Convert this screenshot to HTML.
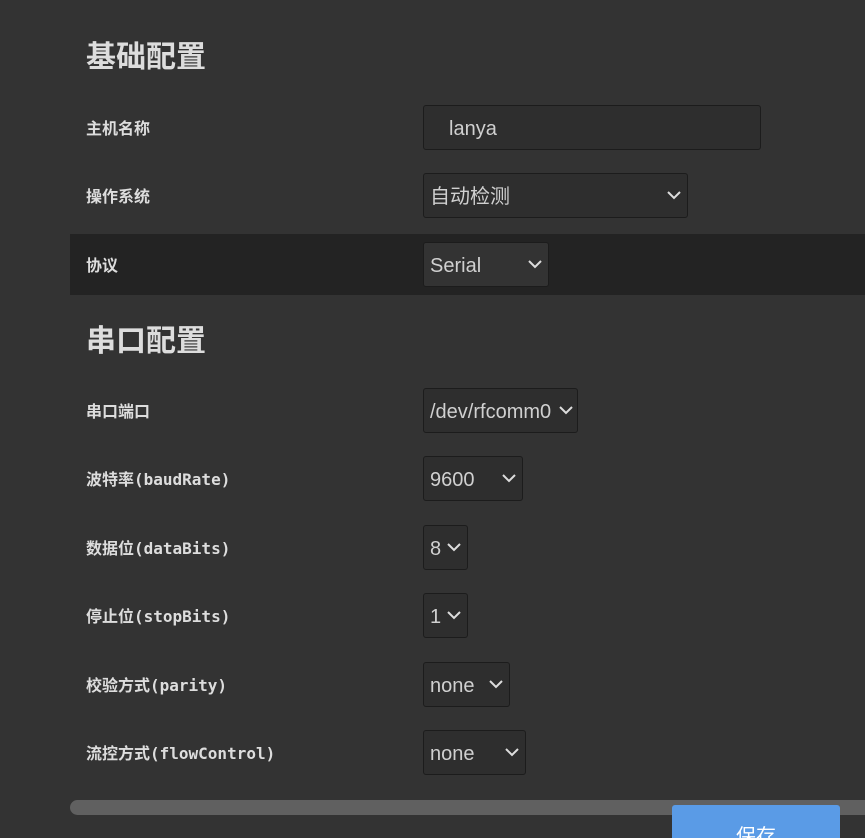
<!DOCTYPE html>
<html style="overflow:hidden;height:838px"><head><meta charset="utf-8"><style>
body{margin:0;width:865px;height:838px;background:#333;overflow:hidden;position:relative;font-family:"Liberation Sans","Noto Sans CJK SC",sans-serif;color:#ddd}
.h{position:absolute;left:86px;font-size:30px;font-weight:bold;color:#ddd;line-height:1}
.l{position:absolute;left:86px;font-size:16px;font-weight:bold;font-family:"DejaVu Sans Mono","Noto Sans CJK SC",monospace;line-height:1;color:#ddd}
.b{position:absolute;left:423px;border:1px solid #1c1c1c;border-radius:3px;background:#2e2e2e;font-size:20px;color:#d0d0d0;line-height:46px;padding-left:6px;box-sizing:border-box;height:45px}
.b svg{position:absolute;right:6px;top:16px}
.row{position:absolute;left:70px;right:0;top:234px;height:61px;background:#232323}
</style></head><body>
<div class="h" style="top:43px">基础配置</div>
<div class="l" style="top:121px">主机名称</div>
<div class="b" style="top:105px;width:338px;padding-left:25px">lanya</div>
<div class="l" style="top:189px">操作系统</div>
<div class="b" style="top:173px;width:265px">自动检测<svg width="14" height="10"><path d="M1 2l6 6 6-6" stroke="#ddd" stroke-width="2" fill="none"/></svg></div>
<div class="row"></div>
<div class="l" style="top:258px">协议</div>
<div class="b" style="top:242px;width:126px;background:#333">Serial<svg width="14" height="10"><path d="M1 2l6 6 6-6" stroke="#ddd" stroke-width="2" fill="none"/></svg></div>
<div class="h" style="top:327px">串口配置</div>
<div class="l" style="top:404px">串口端口</div>
<div class="b" style="top:388px;width:155px">/dev/rfcomm0<svg width="14" height="10" style="right:4px"><path d="M1 2l6 6 6-6" stroke="#ddd" stroke-width="2" fill="none"/></svg></div>
<div class="l" style="top:472px">波特率(baudRate)</div>
<div class="b" style="top:456px;width:100px">9600<svg width="14" height="10"><path d="M1 2l6 6 6-6" stroke="#ddd" stroke-width="2" fill="none"/></svg></div>
<div class="l" style="top:541px">数据位(dataBits)</div>
<div class="b" style="top:525px;width:45px">8<svg width="14" height="10"><path d="M1 2l6 6 6-6" stroke="#ddd" stroke-width="2" fill="none"/></svg></div>
<div class="l" style="top:609px">停止位(stopBits)</div>
<div class="b" style="top:593px;width:45px">1<svg width="14" height="10"><path d="M1 2l6 6 6-6" stroke="#ddd" stroke-width="2" fill="none"/></svg></div>
<div class="l" style="top:678px">校验方式(parity)</div>
<div class="b" style="top:662px;width:87px">none<svg width="14" height="10"><path d="M1 2l6 6 6-6" stroke="#ddd" stroke-width="2" fill="none"/></svg></div>
<div class="l" style="top:746px">流控方式(flowControl)</div>
<div class="b" style="top:730px;width:103px">none<svg width="14" height="10"><path d="M1 2l6 6 6-6" stroke="#ddd" stroke-width="2" fill="none"/></svg></div>
<div style="position:absolute;left:70px;right:0;top:800px;height:15px;background:#606060;border-radius:8px 0 0 8px"></div>
<div style="position:absolute;left:672px;top:805px;width:168px;height:33px;background:#5a9be6;border-radius:3px 3px 0 0;overflow:hidden"><div style="position:absolute;left:0;right:0;top:20px;color:#fff;font-size:20px;text-align:center;line-height:24px">保存</div></div>
</body></html>
